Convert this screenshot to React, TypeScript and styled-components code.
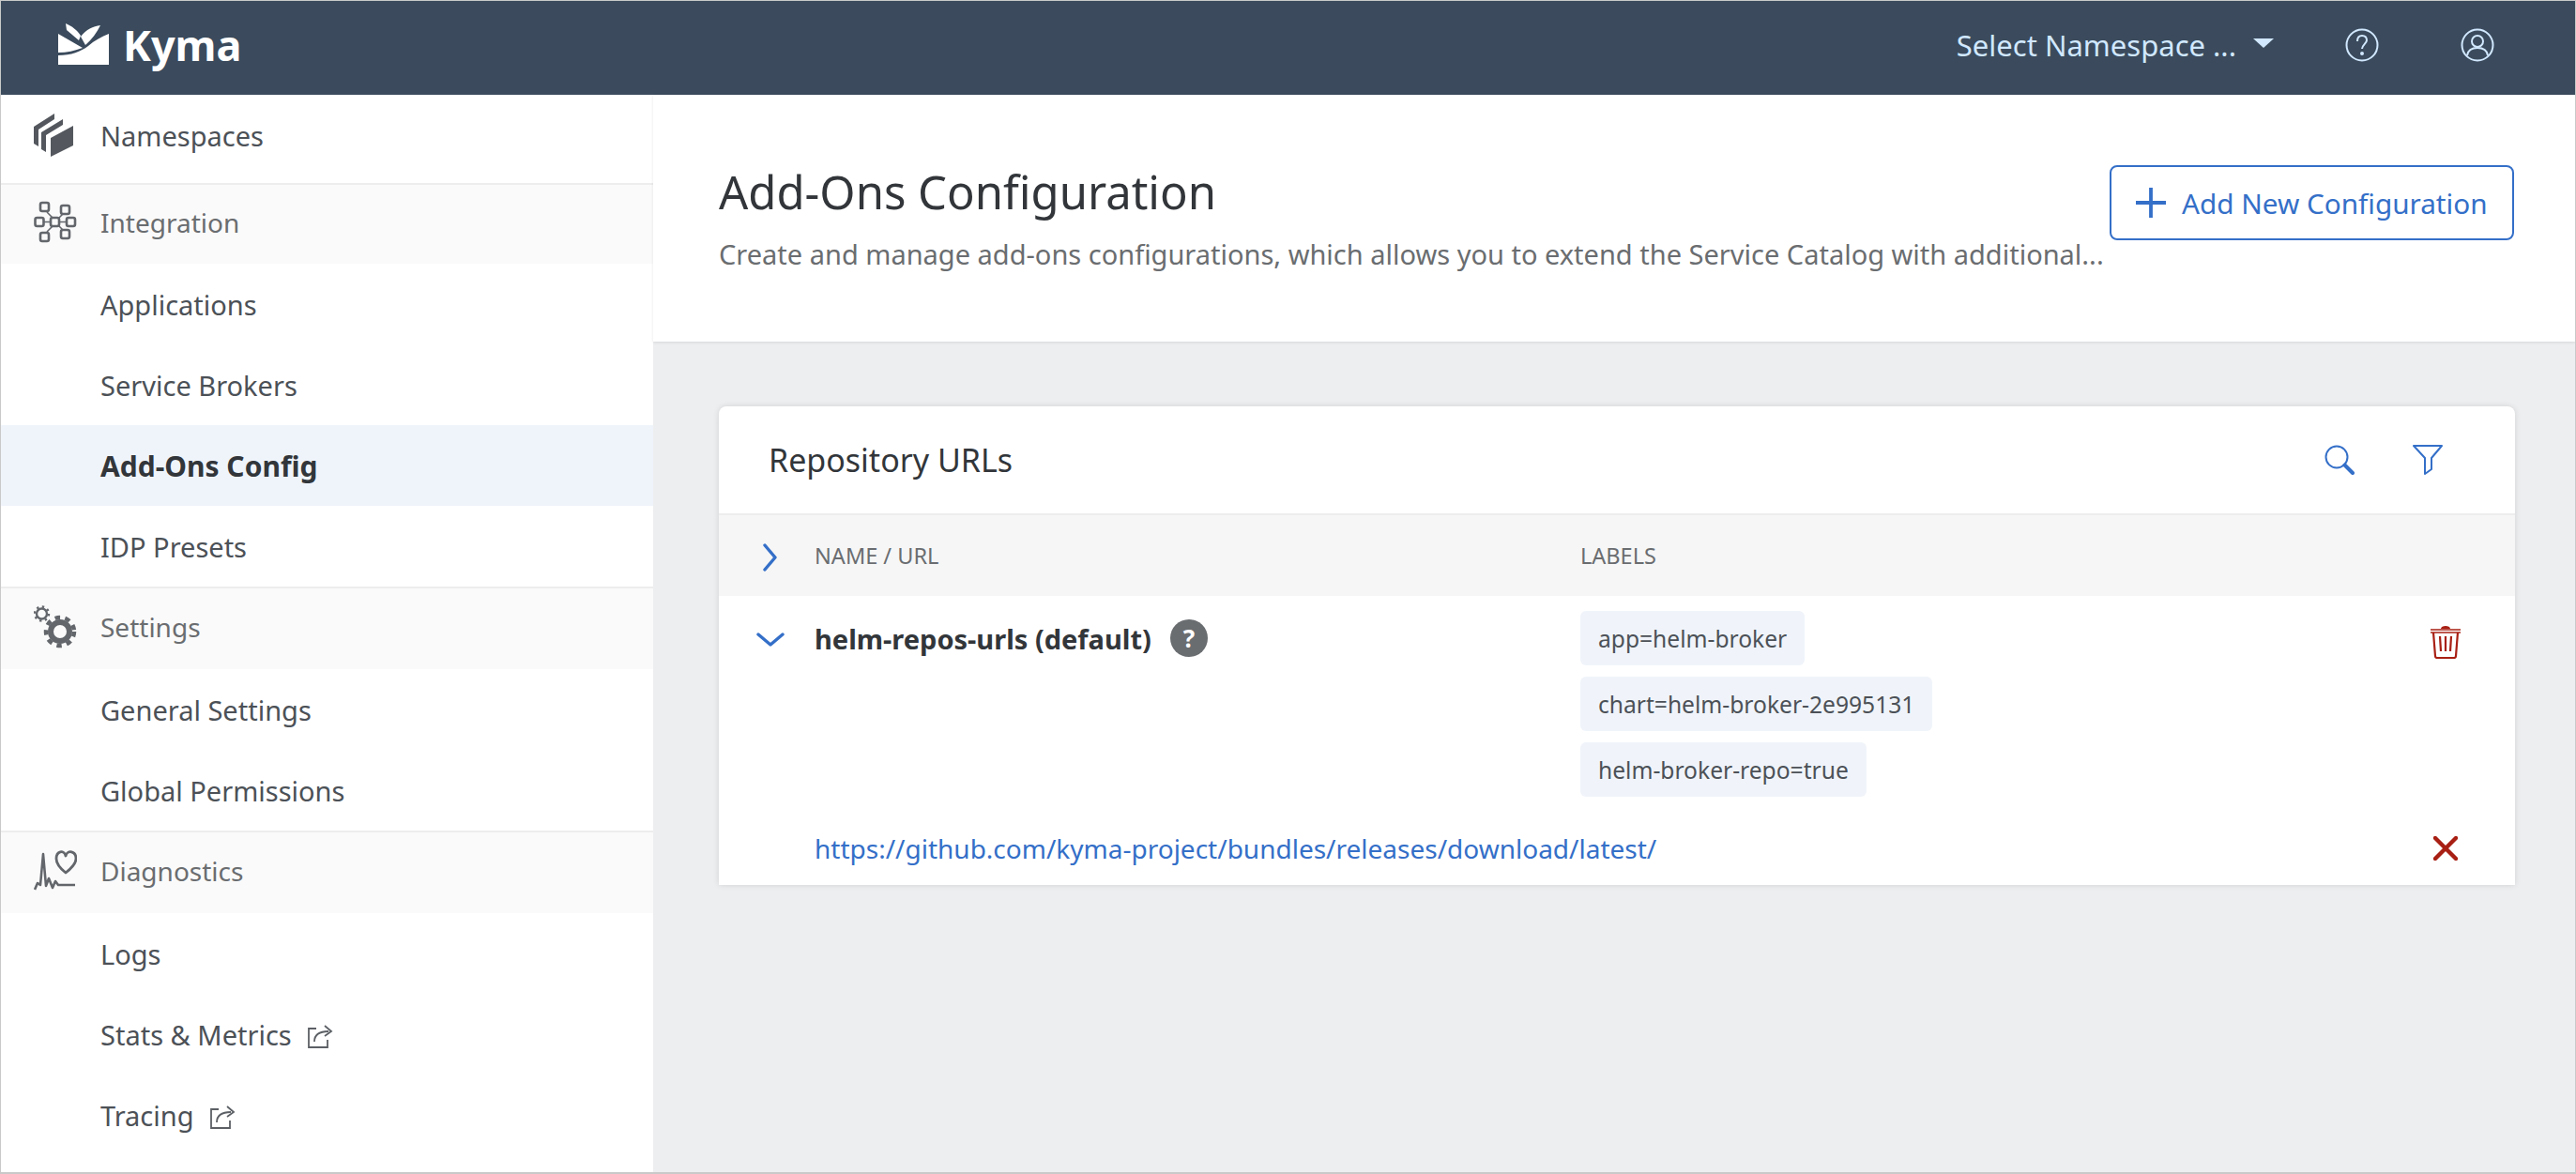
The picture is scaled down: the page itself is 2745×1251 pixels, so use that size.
import React from 'react';
import styled, { createGlobalStyle } from 'styled-components';

const GlobalStyle = createGlobalStyle`
  html, body { margin: 0; padding: 0; background: #fff; }
  * { box-sizing: border-box; }
  body { font-family: "Noto Sans", "Open Sans", Arial, sans-serif; }
`;

const Frame = styled.div`
  width: 2745px;
  height: 1251px;
  border: 1px solid #c9c9c9;
  border-width: 1px 1px 2px 1px;
  display: flex;
  flex-direction: column;
  overflow: hidden;
  background: #fff;
`;

const Header = styled.header`
  height: 100px;
  flex: none;
  background: #3b4b5d;
  display: flex;
  align-items: center;
  padding-left: 61px;
`;

const Brand = styled.div`
  display: flex;
  align-items: center;
  gap: 15px;
  height: 100%;
  padding-bottom: 8px;
`;

const BrandName = styled.span`
  color: #fff;
  font-size: 45px;
  font-weight: 700;
  line-height: 1;
`;

const HeaderRight = styled.div`
  margin-left: auto;
  display: flex;
  align-items: center;
  height: 100%;
  padding-right: 86px;
  padding-bottom: 6px;
  color: #d1e8ff;
`;

const NamespaceSelect = styled.span`
  font-size: 31px;
  margin-right: 18px;
`;

const Caret = styled.span`
  width: 0;
  height: 0;
  border-left: 11px solid transparent;
  border-right: 11px solid transparent;
  border-top: 10px solid #d1e8ff;
  margin-right: 76px;
  margin-bottom: 4px;
`;

const HeaderIcon = styled.svg`
  width: 36px;
  height: 36px;
  fill: none;
  stroke: #d1e8ff;
  stroke-width: 2;
  & + & { margin-left: 87px; }
`;

const Body = styled.div`
  flex: 1;
  display: flex;
  min-height: 0;
`;

const Sidebar = styled.nav`
  width: 695px;
  flex: none;
  display: flex;
  flex-direction: column;
  background: #fff;
`;

const TopItem = styled.div`
  height: 96px;
  display: flex;
  align-items: center;
  padding-left: 35px;
  font-size: 29px;
  color: #4c5157;
  border-bottom: 2px solid #ededed;
  padding-bottom: 8px;
`;

const GroupHead = styled.div<{ $short?: boolean }>`
  height: ${({ $short }) => ($short ? 84 : 86)}px;
  display: flex;
  align-items: center;
  padding-left: 35px;
  background: #fafafa;
  color: #6a6d70;
  font-size: 28px;
  padding-bottom: ${({ $short }) => ($short ? 5 : 4)}px;
`;

const GroupRule = styled.div`
  height: 2px;
  background: #ededed;
`;

const NavIcon = styled.svg`
  width: 46px;
  height: 46px;
  flex: none;
  margin-right: 25px;
  color: #63676c;
`;

const NavItem = styled.div<{ $active?: boolean }>`
  height: 86px;
  display: flex;
  align-items: center;
  padding-left: 106px;
  font-size: ${({ $active }) => ($active ? 30 : 29)}px;
  color: ${({ $active }) => ($active ? '#32363a' : '#4c5157')};
  font-weight: ${({ $active }) => ($active ? 700 : 400)};
  background: ${({ $active }) => ($active ? '#eff4fb' : 'transparent')};
`;

const LinkOut = styled.svg`
  width: 28px;
  height: 28px;
  margin-left: 16px;
  margin-top: 4px;
  fill: none;
  stroke: #5c6065;
  stroke-width: 1.8;
`;

const Main = styled.main`
  flex: 1;
  min-width: 0;
  display: flex;
  flex-direction: column;
  background: #edeef0;
`;

const PageHead = styled.div`
  height: 263px;
  flex: none;
  background: #fff;
  box-shadow: 0 1px 3px rgba(0, 0, 0, 0.1);
  display: flex;
  padding: 71px 0 0 70px;
`;

const HeadText = styled.div`
  width: 1482px;
  flex: none;
`;

const Title = styled.h1`
  margin: 0;
  font-size: 49px;
  font-weight: 400;
  line-height: 64px;
  color: #32363a;
`;

const Description = styled.p`
  margin: 15px 0 0;
  font-size: 29px;
  line-height: 40px;
  color: #6a6d70;
  white-space: nowrap;
`;

const AddButton = styled.button`
  width: 431px;
  height: 80px;
  margin-top: 4px;
  background: #fff;
  border: 2px solid #346fc8;
  border-radius: 8px;
  color: #346fc8;
  font: inherit;
  font-size: 29.7px;
  display: flex;
  align-items: center;
  padding: 0 0 0 26px;
  gap: 17px;
`;

const CardWrap = styled.div`
  padding: 69px 64px 0 70px;
`;

const Card = styled.section`
  background: #fff;
  border-radius: 8px 8px 0 0;
  box-shadow: 0 0 6px rgba(0, 0, 0, 0.12);
`;

const CardHead = styled.div`
  height: 116px;
  display: flex;
  align-items: center;
  padding: 0 77px 0 53px;
  border-bottom: 2px solid #ededed;
`;

const CardTitle = styled.h2`
  margin: 0;
  font-size: 34px;
  font-weight: 400;
  color: #32363a;
  flex: 1;
`;

const ToolIcon = styled.svg`
  width: 32px;
  height: 32px;
  fill: none;
  stroke: #346fc8;
  stroke-width: 2;
  & + & { margin-left: 62px; }
`;

const Row = styled.div`
  display: grid;
  grid-template-columns: 102px 816px 1fr 59px;
  padding-right: 45px;
`;

const TableHead = styled(Row)`
  height: 86px;
  background: #f6f6f6;
  align-items: center;
  font-size: 23.5px;
  color: #6a6d70;
`;

const ArrowCell = styled.div`
  display: flex;
  justify-content: center;
  padding-left: 8px;
`;

const Chevron = styled.svg<{ $down?: boolean }>`
  width: 30px;
  height: 30px;
  margin-top: ${({ $down }) => ($down ? 16 : 4)}px;
  fill: none;
  stroke: #346fc8;
  stroke-width: 3.4;
  stroke-linecap: round;
  stroke-linejoin: round;
`;

const RepoRow = styled(Row)`
  padding-top: 16px;
`;

const NameCell = styled.div`
  display: flex;
  align-items: center;
  gap: 20px;
  height: 58px;
  font-size: 29px;
  font-weight: 700;
  color: #32363a;
`;

const HelpBadge = styled.span`
  width: 40px;
  height: 40px;
  border-radius: 50%;
  background: #6a6d70;
  color: #fff;
  font-size: 26px;
  font-weight: 700;
  display: flex;
  align-items: center;
  justify-content: center;
`;

const Labels = styled.div`
  display: flex;
  flex-direction: column;
  align-items: flex-start;
  gap: 12px;
`;

const Label = styled.span`
  height: 58px;
  padding: 0 19px;
  display: flex;
  align-items: center;
  border-radius: 6px;
  background: #f0f4fa;
  color: #4c5157;
  font-size: 24.6px;
`;

const ActionCell = styled.div`
  display: flex;
  justify-content: center;
  padding-top: 13px;
`;

const DangerIcon = styled.svg`
  width: 34px;
  height: 38px;
  color: #a81f13;
  fill: none;
  stroke: currentColor;
`;

const UrlRow = styled(Row)`
  height: 94px;
  padding-top: 16px;
  align-items: center;
`;

const UrlLink = styled.a`
  grid-column: 2 / 4;
  font-size: 28px;
  color: #346fc8;
  text-decoration: none;
`;

const RemoveCell = styled.div`
  grid-column: 4;
  display: flex;
  justify-content: center;
`;

const External = () => (
  <LinkOut viewBox="0 0 28 28">
    <path d="M10 6H2v20h20v-8" />
    <path d="M8 20c0-7 4-11 15-11" />
    <path d="M19 3l7 6-7 5" />
  </LinkOut>
);

export default function App() {
  return (
    <>
      <GlobalStyle />
      <Frame>
        <Header>
          <Brand>
            <svg width="54" height="44" viewBox="0 0 54 44">
              <path fill="#fff" d="M0 11L26 26C18 29 9 31 0 31zM0 34C14 34 24 30 32 24 39 18 46 14 54 11V44H0zM8 0L9 7 22 18 24 13C20 7 15 3 8 0zM45 2C37 3 30 6 24 14L29 23C36 17 41 10 45 2z" />
            </svg>
            <BrandName>Kyma</BrandName>
          </Brand>
          <HeaderRight>
            <NamespaceSelect>Select Namespace ...</NamespaceSelect>
            <Caret />
            <HeaderIcon viewBox="0 0 36 36">
              <circle cx="18" cy="18" r="16.5" />
              <path d="M13 14c0-4 2-6 5-6s5 2 5 5-5 5-5 9" />
              <circle cx="18" cy="27" r="1" fill="#d1e8ff" />
            </HeaderIcon>
            <HeaderIcon viewBox="0 0 36 36">
              <circle cx="18" cy="18" r="16.5" />
              <circle cx="18" cy="14" r="6" />
              <path d="M7 29c1-6 6-8 11-8s10 2 11 8" />
            </HeaderIcon>
          </HeaderRight>
        </Header>
        <Body>
          <Sidebar>
            <TopItem>
              <NavIcon viewBox="0 0 46 46">
                <path fill="#54585e" d="M0 14L22 0v6L5 17v18l-5-3zM8 20L31 6v6L13 23v18l-5-3zM18 26L42 13v21L18 46z" />
              </NavIcon>
              Namespaces
            </TopItem>
            <GroupHead $short>
              <NavIcon viewBox="0 0 46 46" fill="none" stroke="currentColor" strokeWidth="2.6">
                <rect x="1.5" y="18" width="9" height="9" rx="2" />
                <rect x="18" y="18" width="9" height="9" rx="2" />
                <rect x="35" y="18" width="9" height="9" rx="2" />
                <rect x="7" y="2" width="9" height="9" rx="2" />
                <rect x="29" y="5" width="9" height="9" rx="2" />
                <rect x="7" y="34" width="9" height="9" rx="2" />
                <rect x="29" y="31" width="9" height="9" rx="2" />
                <path d="M11 22.5h7M27 22.5h8M14 12l6 6M31 14l-4 4M14 33l6-6M31 31l-4-4" strokeWidth="1.6" />
              </NavIcon>
              Integration
            </GroupHead>
            <NavItem>Applications</NavItem>
            <NavItem>Service Brokers</NavItem>
            <NavItem $active>Add-Ons Config</NavItem>
            <NavItem>IDP Presets</NavItem>
            <GroupRule />
            <GroupHead>
              <NavIcon viewBox="0 0 46 46" fill="none" stroke="currentColor">
                <circle cx="8.5" cy="9" r="5.5" strokeWidth="2.4" />
                <circle cx="8.5" cy="9" r="7.5" strokeWidth="2.4" strokeDasharray="2.4 3.5" />
                <circle cx="28" cy="28" r="10" strokeWidth="6" />
                <circle cx="28" cy="28" r="15" strokeWidth="4.5" strokeDasharray="5.5 5.3" />
              </NavIcon>
              Settings
            </GroupHead>
            <NavItem>General Settings</NavItem>
            <NavItem>Global Permissions</NavItem>
            <GroupRule />
            <GroupHead>
              <NavIcon viewBox="0 0 46 46" fill="none" stroke="currentColor" strokeWidth="2.8" strokeLinejoin="round">
                <path d="M1 43l3-7 3 2L10 5l3 34 3-8 4 10 3-7 3 4h18" strokeWidth="2.6" />
                <path d="M34 25c-5-4-10-10-10-15 0-8 8-10 10-3 2-7 11-5 11 3 0 5-6 11-11 15z" />
              </NavIcon>
              Diagnostics
            </GroupHead>
            <NavItem>Logs</NavItem>
            <NavItem>
              Stats &amp; Metrics
              <External />
            </NavItem>
            <NavItem>
              Tracing
              <External />
            </NavItem>
          </Sidebar>
          <Main>
            <PageHead>
              <HeadText>
                <Title>Add-Ons Configuration</Title>
                <Description>
                  Create and manage add-ons configurations, which allows you to extend the Service Catalog with additional...
                </Description>
              </HeadText>
              <AddButton>
                <svg width="32" height="32" viewBox="0 0 32 32" stroke="#346fc8" strokeWidth="3.8">
                  <path d="M16 0v32M0 16h32" />
                </svg>
                Add New Configuration
              </AddButton>
            </PageHead>
            <CardWrap>
              <Card>
                <CardHead>
                  <CardTitle>Repository URLs</CardTitle>
                  <ToolIcon viewBox="0 0 32 32">
                    <circle cx="13" cy="13" r="11.5" />
                    <path d="M21.5 21.5L30 30" strokeWidth="4" strokeLinecap="round" />
                  </ToolIcon>
                  <ToolIcon viewBox="0 0 32 32" strokeLinejoin="round">
                    <path d="M1 1h30L20 14v12l-7 5V14z" />
                  </ToolIcon>
                </CardHead>
                <TableHead>
                  <ArrowCell>
                    <Chevron viewBox="0 0 30 30">
                      <path d="M9 2l11 13-11 13" />
                    </Chevron>
                  </ArrowCell>
                  <span>NAME / URL</span>
                  <span>LABELS</span>
                </TableHead>
                <RepoRow>
                  <ArrowCell>
                    <Chevron $down viewBox="0 0 30 30">
                      <path d="M2 9l13 11 13-11" />
                    </Chevron>
                  </ArrowCell>
                  <NameCell>
                    helm-repos-urls (default)
                    <HelpBadge>?</HelpBadge>
                  </NameCell>
                  <Labels>
                    <Label>app=helm-broker</Label>
                    <Label>chart=helm-broker-2e995131</Label>
                    <Label>helm-broker-repo=true</Label>
                  </Labels>
                  <ActionCell>
                    <DangerIcon viewBox="0 0 34 38">
                      <path d="M1 7h32M1 10h32" strokeWidth="1.6" />
                      <path fill="currentColor" stroke="none" d="M12 6c0-4 10-4 10 0z" />
                      <path d="M4 10l2 25c0 1 1 2 2 2h18c1 0 2-1 2-2l2-25" strokeWidth="2.2" />
                      <path d="M11 14l1 16M17 14v16M23 14l-1 16" strokeWidth="2.2" />
                    </DangerIcon>
                  </ActionCell>
                </RepoRow>
                <UrlRow>
                  <span />
                  <UrlLink href="#">https://github.com/kyma-project/bundles/releases/download/latest/</UrlLink>
                  <RemoveCell>
                    <svg width="26" height="26" viewBox="0 0 26 26" stroke="#a81f13" strokeWidth="4.4" strokeLinecap="round">
                      <path d="M2 2l22 22M24 2L2 24" />
                    </svg>
                  </RemoveCell>
                </UrlRow>
              </Card>
            </CardWrap>
          </Main>
        </Body>
      </Frame>
    </>
  );
}
